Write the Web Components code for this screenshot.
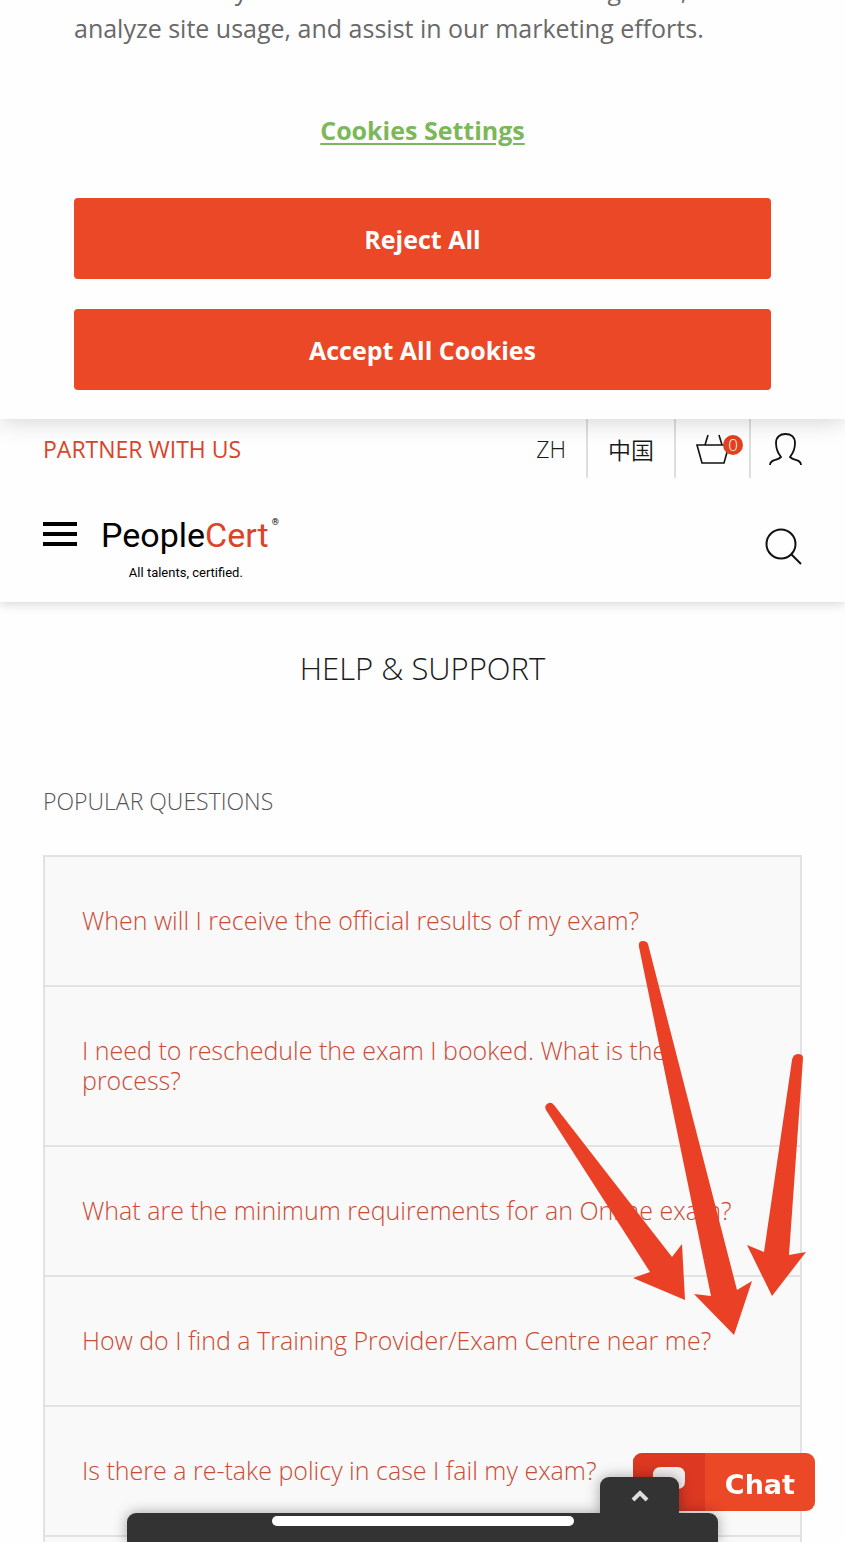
<!DOCTYPE html>
<html lang="en">
<head>
<meta charset="utf-8">
<meta name="viewport" content="width=device-width, initial-scale=1">
<title>Help &amp; Support</title>
<style>
  body {
    --brand: #ea4826;
    --link: #cb4a33;
    --gutter: 43px;
    margin: 0;
    height: 100vh;
    display: flex;
    flex-direction: column;
    overflow: hidden;
    background: #fefefe;
    color: #1a1a1a;
    font-family: "Open Sans", "Noto Sans", "Noto Sans CJK SC", sans-serif;
  }
  main {
    flex: 1;
    min-height: 0;
    display: flex;
    flex-direction: column;
    padding: 0 var(--gutter);
  }
  h1 {
    margin: 46px 0 0;
    font-size: 31px;
    line-height: 40px;
    font-weight: 340;
    text-align: center;
  }
  h2 {
    margin: 96px 0 37px;
    font-size: 23px;
    line-height: 34px;
    font-weight: 350;
    color: #555;
  }
</style>
</head>
<body>
<cookie-banner>
  of cookies on your device to enhance site navigation, analyze site usage, and assist in our marketing efforts.
</cookie-banner>
<site-header></site-header>
<main>
  <h1>HELP &amp; SUPPORT</h1>
  <h2>POPULAR QUESTIONS</h2>
  <faq-list>
    <faq-item>When will I receive the official results of my exam?</faq-item>
    <faq-item>I need to reschedule the exam I booked. What is the process?</faq-item>
    <faq-item>What are the minimum requirements for an Online exam?</faq-item>
    <faq-item>How do I find a Training Provider/Exam Centre near me?</faq-item>
    <faq-item>Is there a re-take policy in case I fail my exam?</faq-item>
    <pointer-arrows slot="overlay"></pointer-arrows>
  </faq-list>
</main>
<chat-button>Chat</chat-button>
<bottom-drawer></bottom-drawer>

<script>
// Small base: clones a template string into an open shadow root.
class BaseElement extends HTMLElement {
  constructor () {
    super()
    this.attachShadow({ mode: 'open' })
    const template = document.createElement('template')
    template.innerHTML = `<style>${this.constructor.styles()}</style>${this.constructor.html()}`
    this.shadowRoot.appendChild(template.content.cloneNode(true))
  }
}

class CookieBanner extends BaseElement {
  static styles () {
    return /* css */`
      :host {
        display: block;
        position: relative;
        z-index: 2;
        padding: 0 74px 29px;
        background: #fefefe;
        box-shadow: 0 0 24px rgba(0, 0, 0, .2);
      }
      /* The notice is scrolled, so only its last line is fully visible */
      .notice {
        display: flex;
        flex-direction: column;
        justify-content: flex-end;
        height: 47px;
        overflow: hidden;
      }
      p {
        flex: none;
        margin: 0;
        font-size: 25px;
        line-height: 38px;
        color: #696969;
      }
      .actions {
        display: flex;
        flex-direction: column;
        gap: 30px;
      }
      a {
        align-self: center;
        margin: 66px 0 21px;
        font-size: 25px;
        line-height: 34px;
        font-weight: 700;
        color: #7cb85a;
        text-decoration-thickness: 2px;
        text-underline-offset: 3px;
      }
      button {
        height: 81px;
        border: 0;
        border-radius: 4px;
        background: var(--brand);
        color: #fff;
        font: 700 25px "Open Sans", sans-serif;
      }
    `
  }

  static html () {
    return /* html */`
      <div class="notice"><p><slot></slot></p></div>
      <div class="actions">
        <a href="#settings">Cookies Settings</a>
        <button type="button">Reject All</button>
        <button type="button">Accept All Cookies</button>
      </div>
    `
  }
}

class SiteHeader extends BaseElement {
  static styles () {
    return /* css */`
      :host {
        display: block;
        position: relative;
        z-index: 1;
        background: #fefefe;
        box-shadow: 0 2px 10px rgba(0, 0, 0, .16);
      }
      a { color: inherit; text-decoration: none; }
      svg { display: block; }
      nav {
        display: flex;
        align-items: stretch;
        height: 59px;
        padding: 0 var(--gutter);
        font-size: 23px;
        font-weight: 350;
      }
      nav a {
        display: flex;
        align-items: center;
        padding: 0 20px;
        border-right: 2px solid #ddd;
      }
      nav .partner {
        margin-right: auto;
        padding: 0;
        border: 0;
        font-weight: 400;
        color: #db4428;
      }
      nav .basket { padding: 0 6px 0 20px; }
      nav .user { padding: 0 0 0 17px; border: 0; }
      .count {
        align-self: flex-start;
        width: 20px;
        margin: 16px 0 0 -7px;
        border-radius: 50%;
        background: #e2401f;
        color: #fff;
        font-size: 17px;
        line-height: 20px;
        text-align: center;
      }
      .bar {
        display: flex;
        align-items: flex-start;
        height: 87px;
        padding: 37px var(--gutter) 0;
      }
      button {
        padding: 0;
        border: 0;
        background: none;
      }
      .menu { margin: 7px 24px 0 0; }
      .logo {
        display: flex;
        flex-direction: column;
        align-items: center;
        font-family: Roboto, sans-serif;
        color: #000;
      }
      .name { display: flex; font-size: 34px; line-height: 40px; }
      .name span { color: #dc4326; }
      .name sup { font-size: 9px; line-height: 14px; margin-left: 3px; }
      .tag { font-size: 13px; line-height: 20px; margin: 8px 8px 0 0; }
      .search { margin: 13px 0 0 auto; }
    `
  }

  static html () {
    return /* html */`
      <nav>
        <a class="partner" href="#partner">PARTNER WITH US</a>
        <a href="#language">ZH</a>
        <a href="#country">中国</a>
        <a class="basket" href="#basket">
          <svg width="34" height="34" viewBox="0 0 34 34" fill="none" stroke="#111" stroke-width="1.600">
            <path d="M1 13H33L28 31H6ZM9 13L12 3M26 13L23 3"/>
          </svg>
          <span class="count">0</span>
        </a>
        <a class="user" href="#account" aria-label="Account">
          <svg width="34" height="34" viewBox="0 0 34 34" fill="none" stroke="#111" stroke-width="1.800">
            <path d="M2 33C2 27 9 29 13 25C9 20 8 17 8 11C8 5 12 2 17.500 2C23 2 27 5 27 11C27 17 26 20 22 25C26 29 33 27 33 33"/>
          </svg>
        </a>
      </nav>
      <div class="bar">
        <button class="menu" type="button" aria-label="Menu">
          <svg width="34" height="26" viewBox="0 0 34 26"><path d="M0 0H34V4H0ZM0 10H34V14H0ZM0 20H34V24H0Z"/></svg>
        </button>
        <a class="logo" href="#home">
          <div class="name">People<span>Cert</span><sup>®</sup></div>
          <div class="tag">All talents, certified.</div>
        </a>
        <button class="search" type="button" aria-label="Search">
          <svg width="37" height="37" viewBox="0 0 37 37" fill="none" stroke="#111" stroke-width="2">
            <circle cx="16" cy="16" r="14.500"/><path d="M26 26L36 36"/>
          </svg>
        </button>
      </div>
    `
  }
}

class FaqList extends BaseElement {
  static styles () {
    return /* css */`
      :host {
        display: block;
        position: relative;
        flex: 1;
        border: 2px solid #e2e2e2;
        border-bottom: 0;
        background: #f9f9f9;
      }
    `
  }

  static html () {
    return /* html */`<slot></slot><slot name="overlay"></slot>`
  }
}

class FaqItem extends BaseElement {
  static styles () {
    return /* css */`
      :host {
        display: block;
        padding: 48px 37px 50px;
        border-bottom: 2px solid #e2e2e2;
        font-size: 25px;
        line-height: 30px;
        font-weight: 350;
      }
      a { display: block; color: var(--link); text-decoration: none; }
    `
  }

  static html () {
    return /* html */`<a href="#question"><slot></slot></a>`
  }
}

// Hand-drawn arrows laid over the list, pointing to the chat button.
class PointerArrows extends BaseElement {
  static styles () {
    return /* css */`
      :host {
        position: absolute;
        top: 78px;
        right: -20px;
        pointer-events: none;
      }
      svg { display: block; }
    `
  }

  static html () {
    return /* html */`
      <svg width="280" height="410" viewBox="540 935 280 410" fill="#ea4025">
        <path d="M546 1110Q544 1106 547 1104Q551 1101 554 1105L672 1257L682 1244L685 1300L633 1278L650 1272Z"/>
        <path d="M639 947Q638 941 643 941Q647 941 648 944L737 1290L752 1281L734 1335L694 1294L711 1296Z"/>
        <path d="M792 1060Q793 1054 798 1054Q803 1054 803 1058L789 1255L806 1252L772 1296L747 1245L764 1252Z"/>
      </svg>
    `
  }
}

class ChatButton extends BaseElement {
  static styles () {
    return /* css */`
      :host {
        position: fixed;
        z-index: 3;
        right: 30px;
        bottom: 31px;
      }
      button {
        display: flex;
        align-items: center;
        height: 58px;
        padding: 0;
        border: 0;
        border-radius: 9px;
        overflow: hidden;
        background: #ea4826;
        color: #fff;
        font: bold 27px "DejaVu Sans", sans-serif;
      }
      .icon {
        display: grid;
        place-items: center;
        width: 72px;
        height: 58px;
        background: #dc3822;
      }
      .label { padding: 4px 20px 0; }
    `
  }

  static html () {
    return /* html */`
      <button type="button">
        <span class="icon">
          <svg width="32" height="32" viewBox="0 0 32 32" fill="#f4f0ef">
            <path d="M8 1H24Q32 1 32 9V15Q32 23 24 23H18L8 31V23Q0 23 0 15V9Q0 1 8 1Z"/>
          </svg>
        </span>
        <span class="label"><slot></slot></span>
      </button>
    `
  }
}

class BottomDrawer extends BaseElement {
  static styles () {
    return /* css */`
      :host {
        position: fixed;
        z-index: 4;
        left: 15%;
        right: 15%;
        bottom: 0;
        display: flex;
        flex-direction: column;
        filter: drop-shadow(0 0 7px rgba(0, 0, 0, .35));
      }
      button {
        display: grid;
        justify-items: center;
        align-self: flex-end;
        width: 79px;
        height: 36px;
        margin-right: 39px;
        padding: 12px 0 0;
        border: 0;
        border-radius: 9px 9px 0 0;
        background: #333;
      }
      .panel {
        height: 29px;
        border-radius: 9px 9px 0 0;
        background: #333;
      }
      .handle {
        width: 302px;
        height: 10px;
        margin: 3px auto 0;
        border-radius: 5px;
        background: #fff;
      }
    `
  }

  static html () {
    return /* html */`
      <button type="button" aria-label="Expand">
        <svg width="18" height="14" viewBox="0 0 18 14" fill="none" stroke="#ddd" stroke-width="4"><path d="M2 11L9 4L16 11"/></svg>
      </button>
      <div class="panel"><div class="handle"></div></div>
    `
  }
}

customElements.define('cookie-banner', CookieBanner)
customElements.define('site-header', SiteHeader)
customElements.define('faq-list', FaqList)
customElements.define('faq-item', FaqItem)
customElements.define('pointer-arrows', PointerArrows)
customElements.define('chat-button', ChatButton)
customElements.define('bottom-drawer', BottomDrawer)
</script>
</body>
</html>
